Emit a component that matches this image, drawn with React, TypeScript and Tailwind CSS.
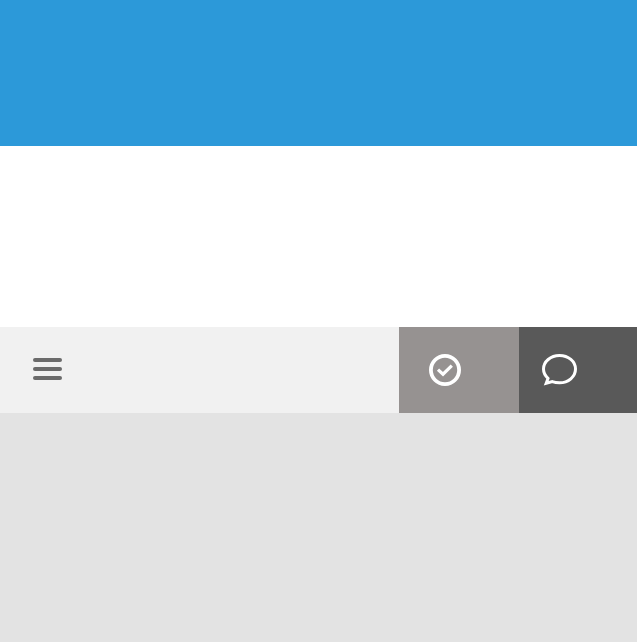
export default function App() {
  return (
    <div className="flex h-[642px] w-full flex-col overflow-hidden bg-[#e3e3e3]">
      <header className="h-[146px] shrink-0 bg-[#2c99d9]" />
      <section className="h-[181px] shrink-0 bg-white" />
      <nav className="flex h-[86px] shrink-0">
        <div className="flex flex-1 bg-[#f1f1f1] pl-[33px] pt-[31px]">
          <button aria-label="Menu" className="flex h-[22px] w-[29px] flex-col gap-[5px]">
            <span className="h-1 w-full rounded-[2px] bg-[#6b6b6b]" />
            <span className="h-1 w-full rounded-[2px] bg-[#6b6b6b]" />
            <span className="h-1 w-full rounded-[2px] bg-[#6b6b6b]" />
          </button>
        </div>
        <button aria-label="Done" className="flex w-[120px] items-start bg-[#969291] pl-[30px] pt-[27px]">
          <svg width="32" height="32" viewBox="0 0 32 32" fill="none" stroke="white">
            <circle cx="16" cy="16" r="14.1" strokeWidth="3.8" />
            <path d="M9 15.6 14 20.2 22.8 11.6" strokeWidth="3.2" />
          </svg>
        </button>
        <button aria-label="Comments" className="flex w-[118px] items-start bg-[#595959] pl-[23px] pt-[27px]">
          <svg width="35" height="32" viewBox="0 0 35 32" fill="none" stroke="white" strokeWidth="3">
            <path d="M17.5 1.5C8.6 1.5 1.5 7.6 1.5 15.1c0 3.7 1.7 6.8 4.5 9.3L4.2 29.3 10.3 27.6c2.2.8 4.6 1.2 7.2 1.2 8.9 0 16-6.1 16-13.7S26.4 1.5 17.5 1.5Z" />
          </svg>
        </button>
      </nav>
      <main className="flex-1 bg-[#e3e3e3]" />
    </div>
  );
}
